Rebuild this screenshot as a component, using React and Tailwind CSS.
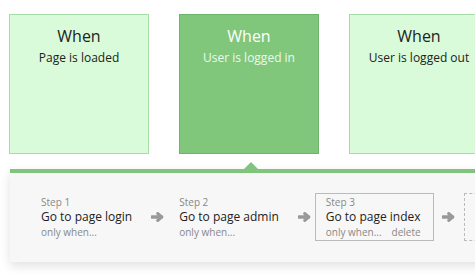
const triggers = [
  { title: "When", text: "Page is loaded", active: false },
  { title: "When", text: "User is logged in", active: true },
  { title: "When", text: "User is logged out", active: false },
];

const steps = [
  { label: "Step 1", text: "Go to page login" },
  { label: "Step 2", text: "Go to page admin" },
  { label: "Step 3", text: "Go to page index", selected: true },
];

function Arrow() {
  return (
    <svg width="13" height="10" viewBox="0 0 13 10" className="ml-[8px] mr-[4px] shrink-0">
      <path d="M1 5H10.5" stroke="#999" strokeWidth="3.6" strokeLinecap="round" fill="none" />
      <path d="M6.8 1.6L10.6 5L6.8 8.4" stroke="#999" strokeWidth="3.2" strokeLinecap="round" strokeLinejoin="round" fill="none" />
    </svg>
  );
}

function Trigger({ title, text, active }) {
  return (
    <div
      className={
        active
          ? "w-[140px] h-[140px] shrink-0 border border-[#6fb46c] bg-[#80c77c] text-center pt-[9px] text-white"
          : "w-[140px] h-[140px] shrink-0 border border-[#a6dca6] bg-[#d9fbd9] text-center pt-[9px] text-[#222]"
      }
    >
      <div className="text-[16px] leading-[25px]">{title}</div>
      <div className={active ? "text-[12px] leading-[18px] text-[#eef8ee]" : "text-[12px] leading-[18px]"}>{text}</div>
    </div>
  );
}

function Step({ label, text, selected }) {
  return (
    <div
      className={
        selected
          ? "shrink-0 border border-[#bbb] pl-[10px] pr-[12px] py-[1px]"
          : "shrink-0 border border-transparent pl-[10px] pr-[10px] py-[1px]"
      }
    >
      <div className="text-[10px] leading-[14px] text-[#888]">{label}</div>
      <div className="text-[12px] leading-[16px] text-[#222] whitespace-nowrap">{text}</div>
      <div className="flex justify-between w-0 min-w-full whitespace-nowrap text-[10px] leading-[14px] text-[#888]">
        <span>only when...</span>
        {selected && <span>delete</span>}
      </div>
    </div>
  );
}

export default function App() {
  return (
    <div className="w-[475px] h-[275px] overflow-hidden bg-white font-['Open_Sans',sans-serif]">
      {/* Triggers */}
      <div className="flex gap-[30px] pl-[9px] pt-[14px]">
        {triggers.map((t, i) => (
          <Trigger key={i} {...t} />
        ))}
      </div>

      {/* Steps panel */}
      <div className="relative ml-[10px] mt-[15px] w-[500px] border-t-4 border-[#80c47e] bg-[#f7f7f7] shadow-[0_4px_10px_rgba(0,0,0,0.12)]">
        <div className="absolute -top-[11px] left-[234px] w-0 h-0 border-x-[7px] border-x-transparent border-b-[7px] border-b-[#80c47e]" />
        <div className="flex items-center pl-[20px] pt-[20px] pb-[21px]">
          {steps.map((s, i) => (
            <div key={i} className="flex items-center">
              <Step {...s} />
              <Arrow />
            </div>
          ))}
          <div className="ml-[5px] w-[40px] h-[48px] shrink-0 border border-dashed border-[#bbb]" />
        </div>
      </div>
    </div>
  );
}
